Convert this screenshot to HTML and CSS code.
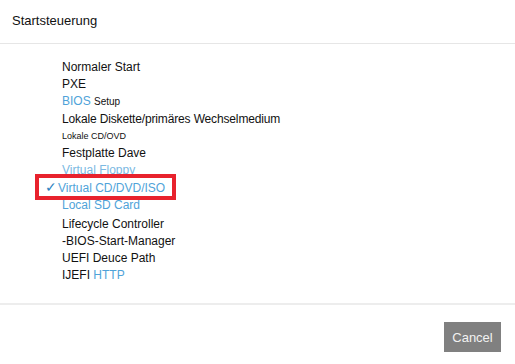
FILE: index.html
```html
<!DOCTYPE html>
<html lang="de">
  <head>
    <meta charset="UTF-8" />
    <meta name="viewport" content="width=device-width, initial-scale=1.0" />
    <title>Startsteuerung</title>
    <link rel="stylesheet" href="styles.css">
  </head>
  <body>
    <div class="dialog">
      <div class="header">Startsteuerung</div>
      <ul class="boot-list">
        <li>Normaler Start</li>
        <li>PXE</li>
        <li><span class="link">BIOS</span> <span class="small">Setup</span></li>
        <li class="wide">Lokale Diskette/primäres Wechselmedium</li>
        <li class="tiny">Lokale CD/OVD</li>
        <li>Festplatte Dave</li>
        <li class="link pale">Virtual Floppy</li>
        <li class="link selected"><span class="check">✓</span>Virtual CD/DVD/ISO</li>
        <li class="link">Local SD Card</li>
        <li class="gap">Lifecycle Controller</li>
        <li>-BIOS-Start-Manager</li>
        <li>UEFI Deuce Path</li>
        <li>IJEFI <span class="link">HTTP</span></li>
      </ul>
      <div class="footer">
        <button class="cancel">Cancel</button>
      </div>
    </div>
  </body>
</html>
```

FILE: styles.css
```css
body {
  margin: 0;
  font-family: "Liberation Sans", Arial, sans-serif;
  color: #111;
  background: #fff;
}

.dialog {
  width: 515px;
}

.header {
  height: 44px;
  line-height: 42px;
  padding-left: 12px;
  font-size: 13px;
  border-bottom: 1px solid #e6e6e6;
  box-sizing: border-box;
}

.boot-list {
  list-style: none;
  margin: 0;
  padding: 15px 0 19px 62px;
  font-size: 12px;
  line-height: 17px;
  border-bottom: 2px solid #ededed;
}

.wide {
  letter-spacing: -0.15px;
  margin-top: 1px;
}

.link {
  color: #4fa3d9;
}

.pale {
  color: #7bb9e2;
}

.small {
  font-size: 10px;
  color: #111;
}

.tiny {
  font-size: 9px;
}

.gap {
  margin-top: 2px;
}

.selected {
  position: relative;
  margin-left: -4px;
}

.selected::after {
  content: "";
  position: absolute;
  left: -23px;
  top: -5px;
  width: 141px;
  height: 26px;
  border: 4px solid #e8222d;
  box-sizing: border-box;
}

.check {
  display: inline-block;
  width: 13px;
  margin-left: -13px;
  font-size: 14px;
  color: #2c7fc0;
}

.footer {
  display: flex;
  justify-content: flex-end;
  padding: 17px 14px 13px 0;
}

.cancel {
  width: 57px;
  height: 30px;
  border: none;
  background-color: #808080;
  color: #f2f2f2;
  font-family: "Liberation Sans", Arial, sans-serif;
  font-size: 13px;
  padding: 0;
}
```
